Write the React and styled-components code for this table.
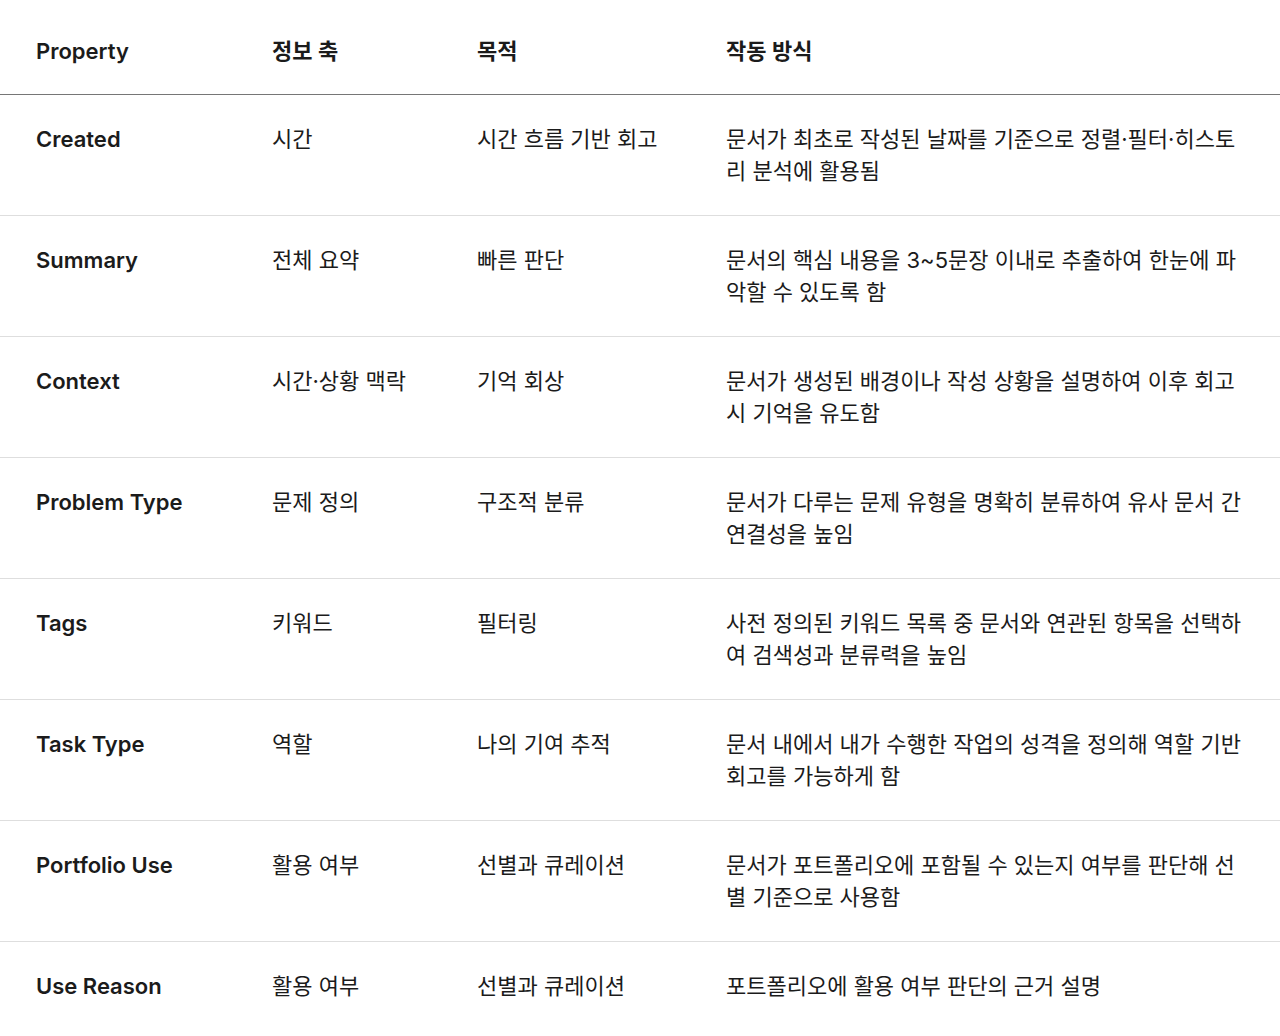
import React from "react";
import styled, { createGlobalStyle } from "styled-components";

const GlobalStyle = createGlobalStyle`
  html, body {
    margin: 0;
    padding: 0;
    background: #fff;
  }
  body {
    font-family: Inter, "Noto Sans CJK KR", sans-serif;
    color: #1b1b1b;
  }
`;

const Table = styled.table`
  width: 1280px;
  border-collapse: collapse;
  table-layout: fixed;
`;

const HeadCell = styled.th`
  text-align: left;
  font-size: 22px;
  font-weight: 600;
  line-height: 32px;
  padding: 35px 0 27px 36px;
  border-bottom: 1px solid #767676;
  vertical-align: top;
  &:last-child {
    padding-right: 36px;
  }
`;

const Row = styled.tr`
  border-bottom: 1px solid #dedede;
  &:last-child {
    border-bottom: none;
  }
`;

const Cell = styled.td`
  font-size: 22px;
  line-height: 32px;
  padding: 28px 0 28px 36px;
  vertical-align: top;
  font-weight: ${(p) => (p.$strong ? 600 : 400)};
  &:last-child {
    padding-right: 36px;
  }
`;

const rows = [
  ["Created", "시간", "시간 흐름 기반 회고", "문서가 최초로 작성된 날짜를 기준으로 정렬·필터·히스토리 분석에 활용됨"],
  ["Summary", "전체 요약", "빠른 판단", "문서의 핵심 내용을 3~5문장 이내로 추출하여 한눈에 파악할 수 있도록 함"],
  ["Context", "시간·상황 맥락", "기억 회상", "문서가 생성된 배경이나 작성 상황을 설명하여 이후 회고 시 기억을 유도함"],
  ["Problem Type", "문제 정의", "구조적 분류", "문서가 다루는 문제 유형을 명확히 분류하여 유사 문서 간 연결성을 높임"],
  ["Tags", "키워드", "필터링", "사전 정의된 키워드 목록 중 문서와 연관된 항목을 선택하여 검색성과 분류력을 높임"],
  ["Task Type", "역할", "나의 기여 추적", "문서 내에서 내가 수행한 작업의 성격을 정의해 역할 기반 회고를 가능하게 함"],
  ["Portfolio Use", "활용 여부", "선별과 큐레이션", "문서가 포트폴리오에 포함될 수 있는지 여부를 판단해 선별 기준으로 사용함"],
  ["Use Reason", "활용 여부", "선별과 큐레이션", "포트폴리오에 활용 여부 판단의 근거 설명"],
];

export default function App() {
  return (
    <>
      <GlobalStyle />
      <Table>
        <colgroup>
          <col style={{ width: 236 }} />
          <col style={{ width: 205 }} />
          <col style={{ width: 249 }} />
          <col />
        </colgroup>
        <thead>
          <tr>
            <HeadCell>Property</HeadCell>
            <HeadCell>정보 축</HeadCell>
            <HeadCell>목적</HeadCell>
            <HeadCell>작동 방식</HeadCell>
          </tr>
        </thead>
        <tbody>
          {rows.map(([name, axis, goal, how]) => (
            <Row key={name}>
              <Cell $strong>{name}</Cell>
              <Cell>{axis}</Cell>
              <Cell>{goal}</Cell>
              <Cell>{how}</Cell>
            </Row>
          ))}
        </tbody>
      </Table>
    </>
  );
}
